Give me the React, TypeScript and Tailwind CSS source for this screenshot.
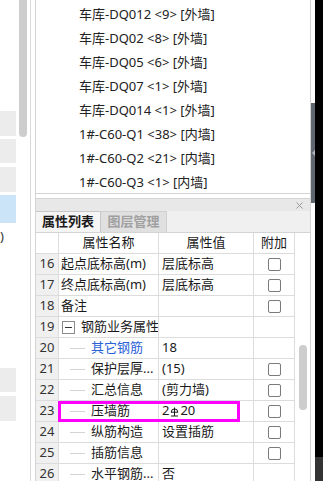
import React from 'react';

const listItems = [
  '车库-DQ012 <9> [外墙]',
  '车库-DQ02 <8> [外墙]',
  '车库-DQ05 <6> [外墙]',
  '车库-DQ07 <1> [外墙]',
  '车库-DQ014 <1> [外墙]',
  '1#-C60-Q1 <38> [内墙]',
  '1#-C60-Q2 <21> [内墙]',
  '1#-C60-Q3 <1> [内墙]',
];

type Row = {
  n: number;
  name: string;
  value?: React.ReactNode;
  check: boolean;
  kind: 'plain' | 'group' | 'child';
  blue?: boolean;
  mark?: boolean;
};

function RebarSymbol() {
  return (
    <svg width="9" height="12" viewBox="0 0 9 12" className="mx-[1px] mt-[1px]">
      <path d="M1.2 6.2 A3.3 3.3 0 0 1 7.8 6.2" fill="none" stroke="#1a1a1a" strokeWidth="1" />
      <line x1="4.5" y1="1.5" x2="4.5" y2="10" stroke="#1a1a1a" strokeWidth="1" />
      <line x1="1" y1="6.2" x2="8" y2="6.2" stroke="#1a1a1a" strokeWidth="1" />
      <line x1="1" y1="10" x2="8" y2="10" stroke="#1a1a1a" strokeWidth="1" />
    </svg>
  );
}

const rows: Row[] = [
  { n: 16, name: '起点底标高(m)', value: '层底标高', check: true, kind: 'plain' },
  { n: 17, name: '终点底标高(m)', value: '层底标高', check: true, kind: 'plain' },
  { n: 18, name: '备注', check: true, kind: 'plain' },
  { n: 19, name: '钢筋业务属性', check: false, kind: 'group' },
  { n: 20, name: '其它钢筋', value: '18', check: false, kind: 'child', blue: true },
  { n: 21, name: '保护层厚...', value: '(15)', check: true, kind: 'child' },
  { n: 22, name: '汇总信息', value: '(剪力墙)', check: true, kind: 'child' },
  {
    n: 23,
    name: '压墙筋',
    value: (
      <span className="flex items-center">
        2<RebarSymbol />20
      </span>
    ),
    check: true,
    kind: 'child',
    mark: true,
  },
  { n: 24, name: '纵筋构造', value: '设置插筋', check: true, kind: 'child' },
  { n: 25, name: '插筋信息', check: true, kind: 'child' },
  { n: 26, name: '水平钢筋...', value: '否', check: false, kind: 'child' },
];

function Checkbox() {
  return <div className="h-[13px] w-[13px] rounded-[2px] border border-[#7a7a7a] bg-white" />;
}

function PropRow({ row }: { row: Row }) {
  return (
    <div className="relative flex h-[21px] border-b border-[#dcdcdc]">
      <div className="flex w-[23px] items-center justify-center border-r border-[#dcdcdc] bg-[#f0f0f0] text-[#333]">
        {row.n}
      </div>
      <div className="flex w-[100px] items-center overflow-hidden whitespace-nowrap border-r border-[#dcdcdc] pl-[2px]">
        {row.kind === 'plain' && <span>{row.name}</span>}
        {row.kind === 'group' && (
          <>
            <div className="ml-[1px] flex h-[13px] w-[13px] shrink-0 items-center justify-center border border-[#8a8a8a] bg-white">
              <div className="h-px w-[7px] bg-[#333]" />
            </div>
            <span className="ml-[6px]">{row.name}</span>
          </>
        )}
        {row.kind === 'child' && (
          <>
            <div className="ml-[9px] h-px w-[15px] shrink-0 bg-[#d4d4d4]" />
            <span className={`ml-[6px] ${row.blue ? 'text-[#2a62d8]' : ''}`}>{row.name}</span>
          </>
        )}
      </div>
      <div className="flex w-[95px] items-center whitespace-nowrap border-r border-[#dcdcdc] pl-[3px]">
        {row.value}
      </div>
      <div className="flex w-[41px] items-center justify-center border-r border-[#dcdcdc]">
        {row.check && <Checkbox />}
      </div>
      {row.mark && (
        <div className="absolute left-[22px] top-0 h-[21px] w-[182px] border-[3px] border-[#ff00ff]" />
      )}
    </div>
  );
}

export default function App() {
  return (
    <div className="flex h-[481px] w-[323px] overflow-hidden bg-white font-['Noto_Sans','Noto_Sans_CJK_SC',sans-serif] text-[13px] text-[#1a1a1a]">
      {/* left panel, clipped */}
      <div className="flex w-[31px] shrink-0 border-r border-[#d9d9d9]">
        <div className="flex w-[16px] flex-col">
          <div className="mt-[111px] h-[25px] bg-[#ececec]" />
          <div className="mt-[3px] h-[24px] bg-[#ececec]" />
          <div className="mt-[4px] h-[25px] bg-[#ececec]" />
          <div className="mt-[3px] h-[28px] bg-[#cce4f7]" />
          <div className="mt-[5px] h-[16px] leading-[16px] text-[#333]">)</div>
          <div className="mt-[124px] h-[24px] bg-[#ececec]" />
          <div className="mt-[4px] h-[25px] bg-[#ececec]" />
        </div>
        <div className="ml-[3px] h-[137px] w-[8px] rounded-b-full bg-[#cdcdcd]" />
      </div>
      <div className="w-[4px] shrink-0" />

      {/* main panel */}
      <div className="flex w-[276px] shrink-0 flex-col border-x border-[#d4d4d4]">
        <div className="h-[194px] shrink-0 border-b border-[#d4d4d4] pl-[43px] pt-[2px]">
          {listItems.map((item) => (
            <div key={item} className="h-[24px] whitespace-pre leading-[24px] text-[#222]">
              {item}
            </div>
          ))}
        </div>
        <div className="h-[4px] shrink-0" />
        <div className="flex flex-1 flex-col border-t border-[#d4d4d4]">
          <div className="flex h-[12px] items-center justify-end bg-[#e8e8e8] pr-[7px]">
            <svg width="7" height="7" viewBox="0 0 7 7">
              <line x1="0.5" y1="0.5" x2="6.5" y2="6.5" stroke="#9a9a9a" strokeWidth="1" />
              <line x1="6.5" y1="0.5" x2="0.5" y2="6.5" stroke="#9a9a9a" strokeWidth="1" />
            </svg>
          </div>
          <div className="flex h-[22px] border-b border-[#d4d4d4] bg-[#f0f0f0]">
            <div className="flex w-[65px] items-center justify-center border-r border-t border-[#c8c8c8] bg-[#f5f5f5] font-bold">
              属性列表
            </div>
            <div className="flex w-[66px] items-center justify-center border-r border-t border-[#d0d0d0] bg-[#e0e0e0] font-bold text-[#a0a0a0]">
              图层管理
            </div>
          </div>
          <div className="flex flex-1">
            <div className="flex w-[259px] flex-col">
              <div className="flex h-[21px] border-b border-[#dcdcdc]">
                <div className="w-[23px] border-r border-[#dcdcdc]" />
                <div className="flex w-[100px] items-center justify-center border-r border-[#dcdcdc]">属性名称</div>
                <div className="flex w-[95px] items-center justify-center border-r border-[#dcdcdc]">属性值</div>
                <div className="flex w-[41px] items-center justify-center border-r border-[#dcdcdc]">附加</div>
              </div>
              {rows.map((row) => (
                <PropRow key={row.n} row={row} />
              ))}
            </div>
            <div className="flex w-[15px] justify-center">
              <div className="mt-[112px] h-[65px] w-[8px] rounded-full bg-[#cdcdcd]" />
            </div>
          </div>
        </div>
      </div>

      {/* splitter */}
      <div className="flex w-[4px] shrink-0 flex-col">
        <div className="mt-[103px] flex h-[100px] items-center justify-center bg-[#5f6771]">
          <svg width="3" height="6" viewBox="0 0 3 6">
            <polygon points="3,0 0,3 3,6" fill="#b4b9c0" />
          </svg>
        </div>
      </div>
      <div className="flex w-[8px] shrink-0 flex-col bg-black">
        <div className="flex-1" />
        <div className="h-[24px] bg-[#333]" />
      </div>
    </div>
  );
}
